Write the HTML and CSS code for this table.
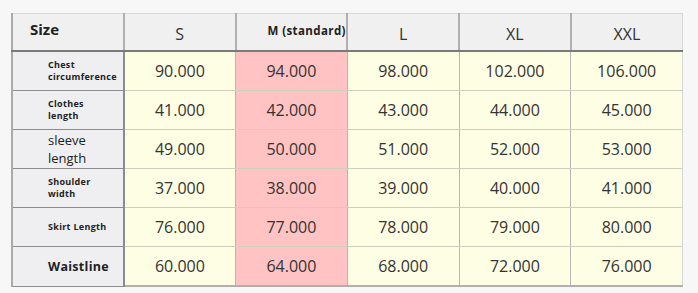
FILE: index.html
```html
<!DOCTYPE html>
<html lang="en">
  <head>
    <meta charset="UTF-8" />
    <meta name="viewport" content="width=device-width, initial-scale=1.0" />
    <title>Size Chart</title>
    <link rel="stylesheet" href="styles.css">
  </head>
  <body>
    <div class="chart-wrap">
      <table class="size-table">
        <thead>
          <tr>
            <th class="corner">Size</th>
            <th>S</th>
            <th class="std"><span>M (standard)</span></th>
            <th>L</th>
            <th>XL</th>
            <th>XXL</th>
          </tr>
        </thead>
        <tbody>
          <tr>
            <td class="label tiny">Chest<br />circumference</td>
            <td>90.000</td>
            <td class="pink">94.000</td>
            <td>98.000</td>
            <td>102.000</td>
            <td>106.000</td>
          </tr>
          <tr>
            <td class="label tiny">Clothes<br />length</td>
            <td>41.000</td>
            <td class="pink">42.000</td>
            <td>43.000</td>
            <td>44.000</td>
            <td>45.000</td>
          </tr>
          <tr>
            <td class="label plain">sleeve<br />length</td>
            <td>49.000</td>
            <td class="pink">50.000</td>
            <td>51.000</td>
            <td>52.000</td>
            <td>53.000</td>
          </tr>
          <tr>
            <td class="label tiny">Shoulder<br />width</td>
            <td>37.000</td>
            <td class="pink">38.000</td>
            <td>39.000</td>
            <td>40.000</td>
            <td>41.000</td>
          </tr>
          <tr>
            <td class="label tiny grey">Skirt Length</td>
            <td>76.000</td>
            <td class="pink">77.000</td>
            <td>78.000</td>
            <td>79.000</td>
            <td>80.000</td>
          </tr>
          <tr>
            <td class="label strong">Waistline</td>
            <td>60.000</td>
            <td class="pink">64.000</td>
            <td>68.000</td>
            <td>72.000</td>
            <td>76.000</td>
          </tr>
        </tbody>
      </table>
    </div>
  </body>
</html>
```

FILE: styles.css
```css
body {
  margin: 0;
  background-color: #f7f7f7;
  font-family: "Open Sans", "Noto Sans", Arial, sans-serif;
}

.chart-wrap {
  padding: 13px 0 0 11px;
}

.size-table {
  width: 672px;
  table-layout: fixed;
  border-collapse: collapse;
  border-left: 2px solid #aaa;
  color: #333;
}

.size-table th {
  height: 30px;
  background-color: #f0f0f0;
  border-top: 1px solid #d8d8d8;
  border-right: 2px solid #b0b0b0;
  border-bottom: 2px solid #7a7a7a;
  font-size: 16px;
  font-weight: normal;
  line-height: 20px;
  padding: 4px 0 0;
}

.size-table th:last-child {
  border-right: 1px solid #d8d8d8;
}

.size-table th.corner {
  text-align: left;
  padding: 0 0 6px 17px;
  font-size: 15px;
  font-weight: bold;
  color: #222;
}

.size-table th.std {
  text-align: left;
  vertical-align: top;
  font-size: 11.5px;
  font-weight: bold;
  letter-spacing: 0.4px;
  white-space: nowrap;
  overflow: visible;
  padding: 0;
}

.size-table th.std span {
  display: block;
  padding: 7px 0 0 31px;
  color: #222;
}

.size-table td {
  height: 38px;
  padding: 0;
  background-color: #fefee4;
  border-right: 1px solid #b8b8b0;
  border-bottom: 1px solid #cfcfc0;
  text-align: center;
  font-size: 16px;
}

.size-table td:last-child {
  border-right: 1px solid #d8d8d8;
}

.size-table td.pink {
  background-color: #ffc3c3;
}

.size-table td.label {
  background-color: #efeff1;
  border-right: 2px solid #8c8c8c;
  border-bottom: 1px solid #8c8c8c;
  text-align: left;
  padding-left: 35px;
  color: #222;
}

.label.tiny {
  font-size: 9px;
  font-weight: bold;
  line-height: 12px;
  letter-spacing: 0.3px;
}

.label.grey {
  color: #555;
}

.label.plain {
  font-size: 13px;
  line-height: 18px;
  padding-left: 32px;
}

.label.strong {
  font-size: 12.5px;
  font-weight: bold;
  letter-spacing: 0.3px;
}

tbody tr:last-child td {
  border-bottom: 2px solid #b0b0b0;
}
```
